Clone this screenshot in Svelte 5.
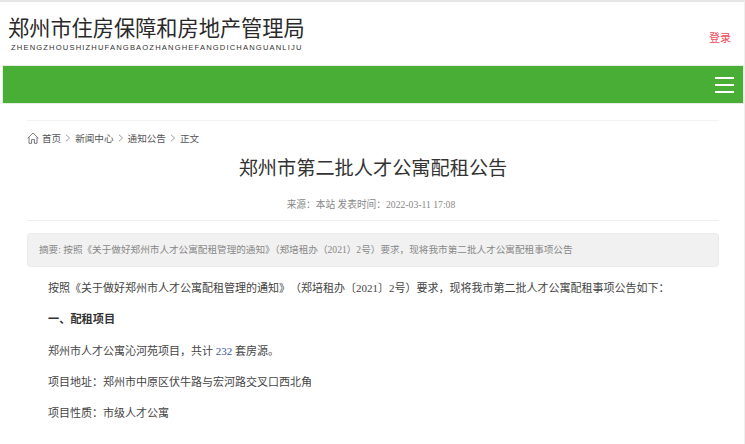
<script lang="ts">
	const crumbs = ['新闻中心', '通知公告', '正文'];
</script>

<div class="page">
	<header class="top">
		<div class="logo">
			<div class="logo-cn">郑州市住房保障和房地产管理局</div>
			<div class="logo-en">ZHENGZHOUSHIZHUFANGBAOZHANGHEFANGDICHANGUANLIJU</div>
		</div>
		<a class="login" href="#login">登录</a>
	</header>

	<nav class="bar">
		<button class="burger" type="button" aria-label="Open menu">
			<span></span><span></span><span></span>
		</button>
	</nav>

	<main class="main">
		<div class="crumbs">
			<svg class="home" viewBox="0 0 12 12" width="12" height="12" aria-hidden="true">
				<path d="M0.6 6.2 L6 1 L11.4 6.2 M2 5.2 V11.3 H4.6 V7.6 H7.4 V11.3 H10 V5.2" fill="none" stroke="#666" stroke-width="0.9" />
			</svg>
			<span>首页</span>
			{#each crumbs as c}
				<svg class="chev" viewBox="0 0 6 8" width="6" height="8" aria-hidden="true">
					<path d="M1 0.8 L4.6 4 L1 7.2" fill="none" stroke="#888" stroke-width="0.8" />
				</svg>
				<span>{c}</span>
			{/each}
		</div>

		<h1>郑州市第二批人才公寓配租公告</h1>
		<div class="meta">来源：本站 发表时间：2022-03-11 17:08</div>
		<div class="summary">摘要: 按照《关于做好郑州市人才公寓配租管理的通知》（郑培租办（2021）2号）要求，现将我市第二批人才公寓配租事项公告</div>

		<article>
			<p>按照《关于做好郑州市人才公寓配租管理的通知》（郑培租办〔2021〕2号）要求，现将我市第二批人才公寓配租事项公告如下：</p>
			<p class="head">一、配租项目</p>
			<p>郑州市人才公寓沁河苑项目，共计 <span class="num">232</span> 套房源。</p>
			<p>项目地址：郑州市中原区伏牛路与宏河路交叉口西北角</p>
			<p>项目性质：市级人才公寓</p>
		</article>
	</main>
</div>

<style>
	:global(body) {
		background: #fff;
	}

	.page {
		height: 444px;
		box-sizing: border-box;
		overflow: hidden;
		border-top: 2px solid #e6e6e6;
		border-right: 1px solid #efefef;
		padding: 0 1px 0 3px;
		font-family: 'Liberation Serif', 'Noto Sans CJK SC', serif;
		color: #333;
		background: #fff;
	}

	.top {
		height: 64px;
		display: flex;
		justify-content: space-between;
	}

	.logo {
		padding: 12px 0 0 5px;
	}

	.logo-cn {
		font-family: 'Noto Sans CJK SC', sans-serif;
		font-size: 21.2px;
		line-height: 26px;
		font-weight: 400;
		color: #2a2a2a;
		white-space: nowrap;
	}

	.logo-en {
		font-family: 'Liberation Sans', sans-serif;
		font-size: 7.6px;
		line-height: 10px;
		letter-spacing: 1.15px;
		margin: 3px 0 0 3px;
		color: #333;
		white-space: nowrap;
	}

	.login {
		font-family: 'Noto Sans CJK SC', sans-serif;
		font-size: 11px;
		line-height: 14px;
		margin: 28px 12px 0 0;
		color: #ee4a5a;
		text-decoration: none;
	}

	.bar {
		height: 37px;
		background: #49ae36;
		box-shadow: 0 0 0 1px #e4efe1;
		display: flex;
		justify-content: flex-end;
		align-items: center;
	}

	.burger {
		display: flex;
		flex-direction: column;
		gap: 5px;
		width: 19px;
		margin-right: 9px;
		padding: 0;
		border: 0;
		background: none;
	}

	.burger span {
		height: 2px;
		background: #fff;
	}

	.main {
		margin: 17px 24px 0 24px;
		border-top: 1px solid #f2f2f2;
	}

	.crumbs {
		display: flex;
		align-items: center;
		gap: 4px;
		height: 18px;
		margin-top: 8px;
		font-family: 'Noto Sans CJK SC', sans-serif;
		font-size: 9.6px;
		color: #555;
	}

	.home {
		margin-right: -1px;
	}

	h1 {
		margin: 6px 0 0;
		text-align: center;
		font-family: 'Noto Sans CJK SC', sans-serif;
		font-size: 19.2px;
		line-height: 28px;
		font-weight: 400;
		color: #333;
	}

	.meta {
		margin-top: 17px;
		padding: 0 4px 8px 0;
		border-bottom: 1px solid #eee;
		text-align: center;
		font-size: 9.7px;
		line-height: 14px;
		color: #888;
	}

	.summary {
		margin-top: 12px;
		height: 34px;
		box-sizing: border-box;
		padding: 0 11px;
		background: #f1f1f1;
		border: 1px dotted #e4e4e4;
		border-radius: 4px;
		font-size: 9.62px;
		line-height: 32px;
		color: #888;
		white-space: nowrap;
		overflow: hidden;
	}

	article {
		padding: 10px 0 0 21px;
		font-size: 11px;
		line-height: 22px;
		color: #444;
		text-spacing-trim: space-all;
	}

	article p {
		margin: 0 0 9.3px;
		white-space: nowrap;
	}

	.head {
		font-weight: 700;
		font-size: 11.2px;
		color: #333;
	}

	.num {
		color: #3a5a9a;
	}
</style>
